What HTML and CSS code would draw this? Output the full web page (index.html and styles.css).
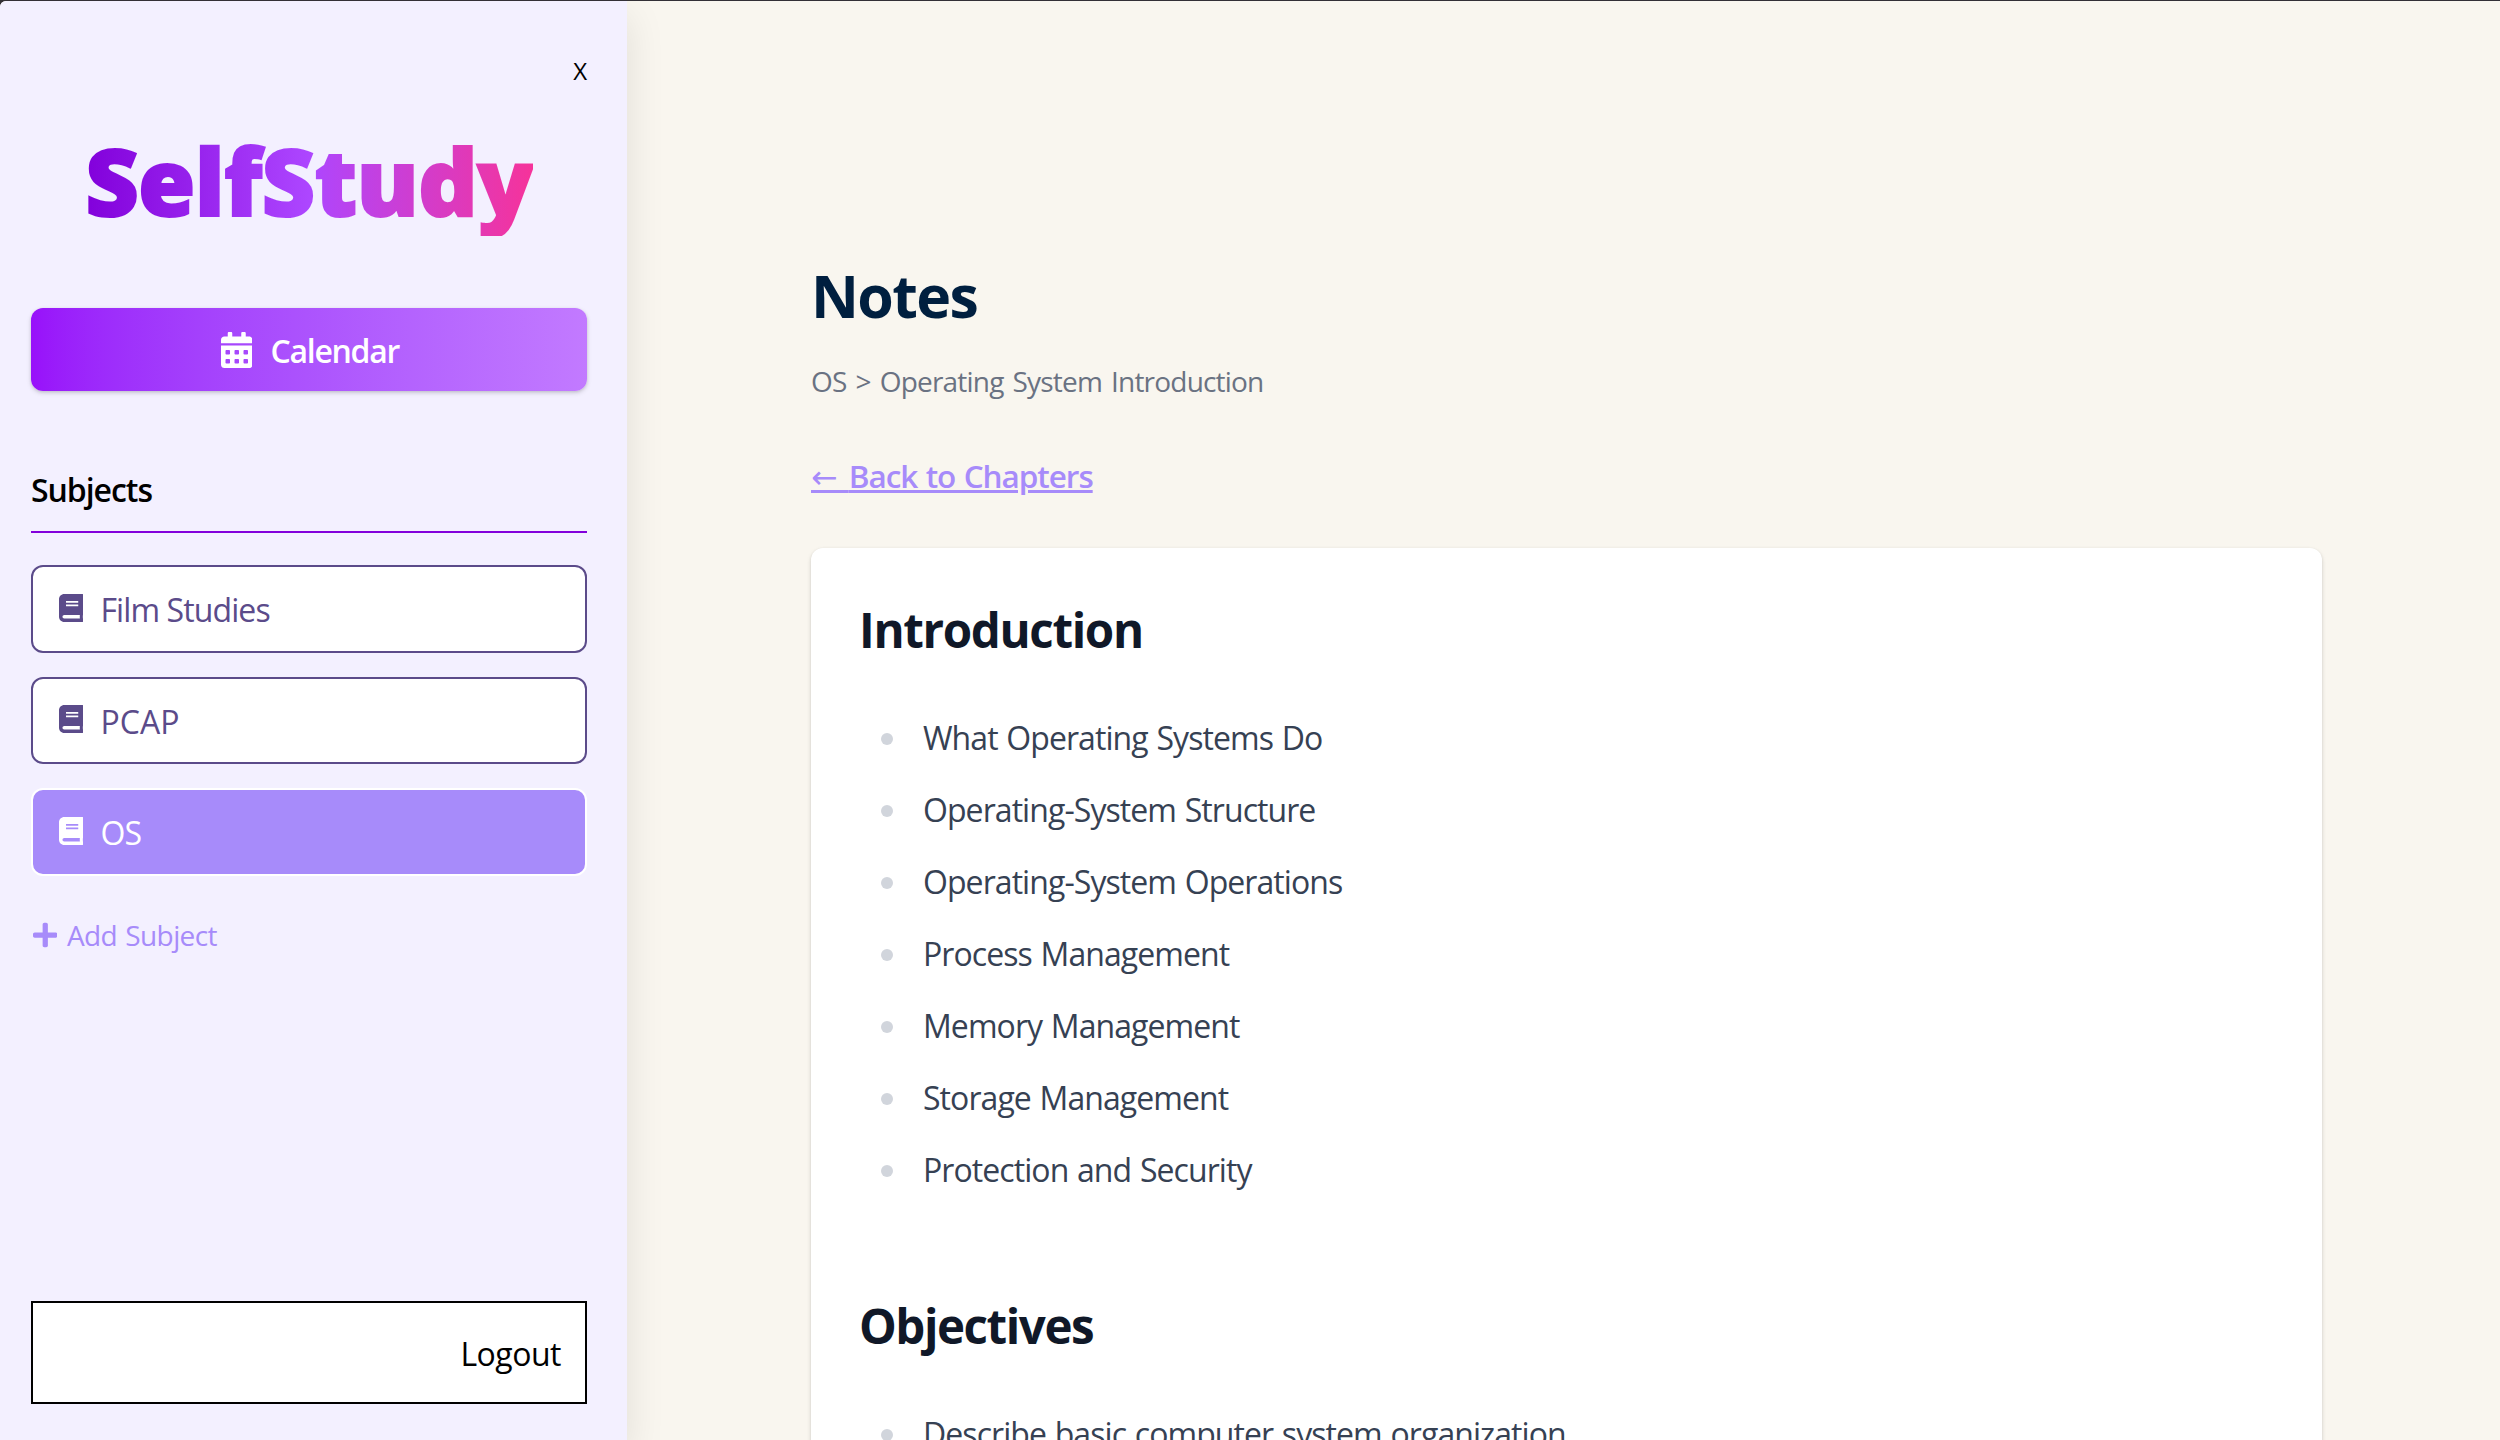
FILE: index.html
```html
<!DOCTYPE html>
<html lang="en">
<head>
<meta charset="utf-8">
<title>SelfStudy</title>
<link rel="stylesheet" href="styles.css">
</head>
<body>
<svg class="sprite" aria-hidden="true">
  <symbol id="book" viewBox="0 0 448 512"><path d="M448 360V24c0-13.300-10.700-24-24-24H96C43 0 0 43 0 96v320c0 53 43 96 96 96h328c13.300 0 24-10.700 24-24v-16c0-7.500-3.500-14.300-8.900-18.700-4.200-15.400-4.200-59.300 0-74.700 5.400-4.300 8.900-11.100 8.900-18.600zM128 134c0-3.300 2.700-6 6-6h212c3.300 0 6 2.700 6 6v20c0 3.300-2.700 6-6 6H134c-3.300 0-6-2.700-6-6v-20zm0 64c0-3.300 2.700-6 6-6h212c3.300 0 6 2.700 6 6v20c0 3.300-2.700 6-6 6H134c-3.300 0-6-2.700-6-6v-20zm253.400 250H96c-17.700 0-32-14.300-32-32 0-17.600 14.400-32 32-32h285.400c-1.900 17.100-1.900 46.900 0 64z"/></symbol>
</svg>
<div class="app">
  <aside class="sidebar">
    <button class="close">X</button>
    <h1 class="logo">SelfStudy</h1>
    <button class="calendar">
      <svg class="calendar-icon" viewBox="0 0 448 512"><path d="M0 464c0 26.500 21.500 48 48 48h352c26.500 0 48-21.500 48-48V192H0v272zm320-196c0-6.600 5.400-12 12-12h40c6.600 0 12 5.400 12 12v40c0 6.600-5.400 12-12 12h-40c-6.600 0-12-5.400-12-12v-40zm0 128c0-6.600 5.400-12 12-12h40c6.600 0 12 5.400 12 12v40c0 6.600-5.400 12-12 12h-40c-6.600 0-12-5.400-12-12v-40zM192 268c0-6.600 5.400-12 12-12h40c6.600 0 12 5.400 12 12v40c0 6.600-5.400 12-12 12h-40c-6.600 0-12-5.400-12-12v-40zm0 128c0-6.600 5.400-12 12-12h40c6.600 0 12 5.400 12 12v40c0 6.600-5.400 12-12 12h-40c-6.600 0-12-5.400-12-12v-40zM64 268c0-6.600 5.400-12 12-12h40c6.600 0 12 5.400 12 12v40c0 6.600-5.400 12-12 12H76c-6.600 0-12-5.400-12-12v-40zm0 128c0-6.600 5.400-12 12-12h40c6.600 0 12 5.400 12 12v40c0 6.600-5.400 12-12 12H76c-6.600 0-12-5.400-12-12v-40zM400 64h-48V16c0-8.800-7.200-16-16-16h-32c-8.800 0-16 7.200-16 16v48H160V16c0-8.800-7.200-16-16-16h-32c-8.800 0-16 7.200-16 16v48H48C21.500 64 0 85.500 0 112v48h448v-48c0-26.500-21.500-48-48-48z"/></svg>
      <span class="calendar-label">Calendar</span>
    </button>
    <h2 class="subjects-title">Subjects</h2>
    <nav class="subjects">
      <a class="subject"><svg class="book"><use href="#book"/></svg><span class="subject-name">Film Studies</span></a>
      <a class="subject"><svg class="book"><use href="#book"/></svg><span class="subject-name code">PCAP</span></a>
      <a class="subject active"><svg class="book"><use href="#book"/></svg><span class="subject-name">OS</span></a>
    </nav>
    <button class="add">
      <svg class="plus" viewBox="0 0 448 512"><path d="M416 208H272V64c0-17.670-14.330-32-32-32h-32c-17.670 0-32 14.330-32 32v144H32c-17.670 0-32 14.330-32 32v32c0 17.670 14.330 32 32 32h144v144c0 17.670 14.330 32 32 32h32c17.670 0 32-14.330 32-32V304h144c17.670 0 32-14.330 32-32v-32c0-17.670-14.330-32-32-32z"/></svg>
      <span>Add Subject</span>
    </button>
    <button class="logout"><span>Logout</span></button>
  </aside>
  <main class="main">
    <h1 class="title">Notes</h1>
    <p class="crumbs">OS &gt; Operating System Introduction</p>
    <a class="back"><span class="arrow">← </span>Back to Chapters</a>
    <article class="card">
      <h2 class="heading">Introduction</h2>
      <ul class="list">
        <li>What Operating Systems Do</li>
        <li>Operating-System Structure</li>
        <li>Operating-System Operations</li>
        <li>Process Management</li>
        <li>Memory Management</li>
        <li>Storage Management</li>
        <li>Protection and Security</li>
      </ul>
      <h2 class="heading">Objectives</h2>
      <ul class="list">
        <li>Describe basic computer system organization</li>
      </ul>
    </article>
  </main>
</div>
</body>
</html>
```
FILE: styles.css
```css
* { box-sizing: border-box; margin: 0; padding: 0; }
html { background: #333036; }
body {
  height: 1440px;
  padding-top: 1px;
  overflow: hidden;
  font-family: "Open Sans", "Noto Sans", sans-serif;
  font-size: 32px;
}
button { font: inherit; border: 0; background: none; color: inherit; }
svg { fill: currentColor; flex: none; }
.sprite { display: none; }

.app {
  display: flex;
  height: 1439px;
  background: #f9f6ef;
  border-top-left-radius: 6px;
  overflow: hidden;
}

/* Sidebar */
.sidebar {
  width: 627px;
  flex: none;
  display: flex;
  flex-direction: column;
  padding: 52px 40px 36px 31px;
  background: #f3f0ff;
  box-shadow: 0 15px 37px rgba(0, 0, 0, 0.1);
}
.close {
  align-self: flex-end;
  height: 36px;
  line-height: 36px;
  font-size: 24px;
  color: #000;
}
.logo {
  align-self: center;
  height: 113px;
  margin-top: 34px;
  line-height: 115px;
  font-size: 93px;
  font-weight: 800;
  letter-spacing: -0.8px;
  color: transparent;
  -webkit-text-stroke: 2px transparent;
  background: linear-gradient(to right, #8200db, #ad46ff, #f6339a);
  -webkit-background-clip: text;
  background-clip: text;
}
.calendar {
  display: flex;
  align-items: center;
  justify-content: center;
  gap: 18px;
  height: 83px;
  flex: none;
  margin-top: 72px;
  padding-left: 2px;
  border-radius: 12px;
  color: #fff;
  background: linear-gradient(to right in oklab, #9810fa, #c27aff);
  box-shadow: 0 2px 5px rgba(0, 0, 0, 0.14), 0 1px 3px rgba(0, 0, 0, 0.1);
}
.calendar-icon { width: 31.5px; height: 36px; }
.calendar-label {
  padding-top: 2px;
  font-weight: 600;
  letter-spacing: -1.29px;
}
.subjects-title {
  height: 68px;
  flex: none;
  margin-top: 74px;
  line-height: 50px;
  font-size: 32px;
  font-weight: 600;
  letter-spacing: -1.04px;
  color: #000;
  border-bottom: 2px solid #8200db;
}
.subjects {
  display: flex;
  flex-direction: column;
  gap: 24px;
  margin-top: 32px;
}
.subject {
  display: flex;
  align-items: center;
  gap: 17.5px;
  height: 87.5px;
  padding: 0 25.5px;
  border: 2px solid #5b4b8a;
  border-radius: 12px;
  background: #fff;
  color: #5b4b8a;
}
.subject.active { background: #a78bfa; border-color: #fff; color: #fff; }
.book { width: 24.5px; height: 28px; margin-bottom: 2px; }
.subject-name { padding-top: 2px; letter-spacing: -0.9px; }
.subject-name.code { letter-spacing: 0; }
.add {
  display: flex;
  align-items: center;
  gap: 10px;
  height: 42px;
  margin-top: 38px;
  padding-left: 1.5px;
  font-size: 28px;
  letter-spacing: -0.61px;
  word-spacing: 1.5px;
  color: #a78bfa;
}
.plus { width: 24.5px; height: 28px; }
.logout {
  height: 103px;
  margin-top: auto;
  padding: 2px 24px 0 0;
  border: 2px solid #000;
  background: #fff;
  color: #000;
  text-align: right;
  letter-spacing: -0.5px;
}

/* Notes */
.main {
  display: flex;
  flex-direction: column;
  align-items: flex-start;
  width: 1695px;
  padding: 254px 0 0 184px;
}
.title {
  line-height: 80px;
  font-size: 59px;
  font-weight: 700;
  letter-spacing: -1.62px;
  color: #001f3f;
}
.crumbs {
  margin-top: 25px;
  line-height: 42px;
  font-size: 28px;
  letter-spacing: -0.8px;
  word-spacing: 2.5px;
  color: #6a7282;
}
.back {
  margin-top: 50px;
  line-height: 48px;
  font-size: 31.5px;
  font-weight: 600;
  letter-spacing: -1.05px;
  word-spacing: 1.3px;
  color: #a78bfa;
  text-decoration: underline 3px;
  text-underline-offset: 2px;
}
.arrow {
  font-family: "DejaVu Sans", sans-serif;
  font-weight: 400;
  letter-spacing: 0;
}
.card {
  align-self: stretch;
  height: 1600px;
  flex: none;
  margin-top: 47px;
  padding: 49.5px 48px;
  border-radius: 12px;
  background: #fff;
  box-shadow: 0 2px 5px rgba(0, 0, 0, 0.1), 0 1px 3px rgba(0, 0, 0, 0.1);
}
.heading {
  line-height: 64px;
  font-size: 47.5px;
  font-weight: 700;
  letter-spacing: -1.35px;
  color: #101828;
}
.list { margin-top: 40px; list-style: none; }
.list + .heading { margin-top: 88px; letter-spacing: -1.45px; }
.list li {
  display: flex;
  align-items: center;
  gap: 30px;
  padding-left: 22px;
  line-height: 72px;
  letter-spacing: -0.93px;
  word-spacing: 1.3px;
  color: #364153;
}
.list li::before {
  content: "";
  width: 12px;
  height: 12px;
  margin-top: 3px;
  border-radius: 50%;
  background: #d1d5dc;
}
```
